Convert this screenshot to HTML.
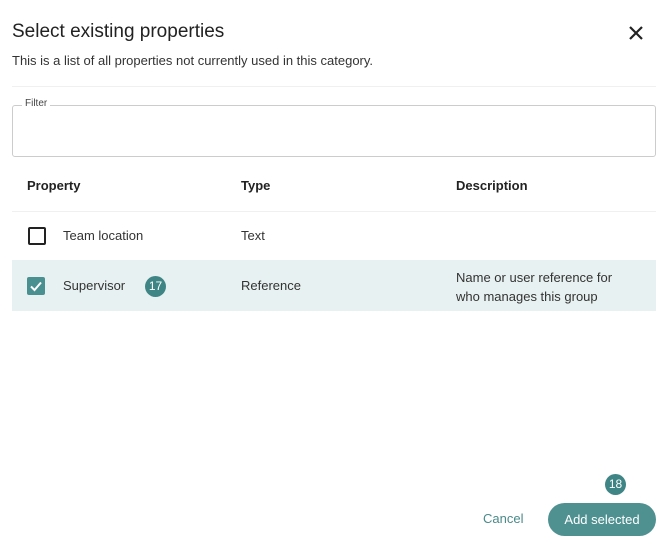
<!DOCTYPE html><html><head><style>
body{margin:0;width:670px;height:548px;background:#fff;font-family:"Liberation Sans",sans-serif;color:#222;position:relative;overflow:hidden}
.a{position:absolute;white-space:nowrap}
.badge{position:absolute;width:21px;height:21px;border-radius:50%;background:#3f8585;color:#fff;font-size:12px;text-align:center;line-height:21px}
</style></head><body>
<div class="a" style="left:12px;top:21px;font-size:19px;color:#222">Select existing properties</div>
<svg class="a" style="left:629px;top:26px" width="14" height="14"><path d="M1 1L13 13M13 1L1 13" stroke="#222" stroke-width="2.2"/></svg>
<div class="a" style="left:12px;top:53px;font-size:13px;color:#333">This is a list of all properties not currently used in this category.</div>
<div class="a" style="left:12px;top:86px;width:644px;height:1px;background:#f0f0f0"></div>
<div class="a" style="left:12px;top:105px;width:642px;height:50px;border:1px solid #ccc;border-radius:3px"></div>
<div class="a" style="left:22px;top:98px;font-size:10px;background:#fff;padding:0 3px;color:#444">Filter</div>
<div class="a" style="left:27px;top:178px;font-size:13px;font-weight:bold;color:#222">Property</div>
<div class="a" style="left:241px;top:178px;font-size:13px;font-weight:bold">Type</div>
<div class="a" style="left:456px;top:178px;font-size:13px;font-weight:bold">Description</div>
<div class="a" style="left:12px;top:211px;width:644px;height:1px;background:#f0f0f0"></div>
<div class="a" style="left:28px;top:227px;width:14px;height:14px;border:2px solid #222;border-radius:2px"></div>
<div class="a" style="left:63px;top:228px;font-size:13px;color:#333">Team location</div>
<div class="a" style="left:241px;top:228px;font-size:13px;color:#333">Text</div>
<div class="a" style="left:12px;top:260px;width:644px;height:51px;background:#e8f1f1"></div>
<div class="a" style="left:27px;top:277px;width:18px;height:18px;background:#4a9090;border-radius:2px"><svg width="18" height="18"><path d="M4 9.5l3.5 3.5L14 5.5" stroke="#fff" stroke-width="2" fill="none"/></svg></div>
<div class="a" style="left:63px;top:278px;font-size:13px;color:#333">Supervisor</div>
<div class="badge" style="left:145px;top:276px">17</div>
<div class="a" style="left:241px;top:278px;font-size:13px;color:#333">Reference</div>
<div class="a" style="left:456px;top:268px;font-size:13px;color:#333;line-height:19px">Name or user reference for<br>who manages this group</div>
<div class="badge" style="left:605px;top:474px">18</div>
<div class="a" style="left:483px;top:511px;font-size:13px;color:#4a8a8a">Cancel</div>
<div class="a" style="left:548px;top:503px;width:108px;height:33px;border-radius:17px;background:#4f9191;color:#fff;font-size:13px;text-align:center;line-height:33px">Add selected</div>
</body></html>
